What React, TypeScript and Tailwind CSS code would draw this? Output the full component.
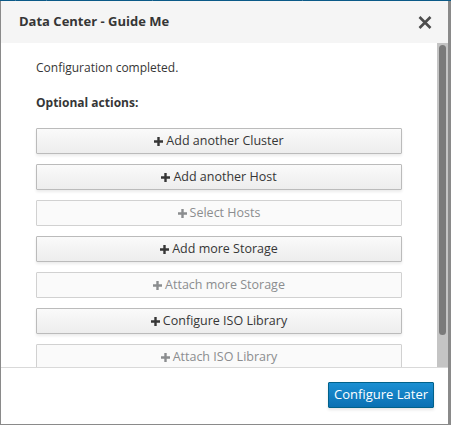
import React from "react";

interface Action {
  label: string;
  enabled: boolean;
}

const actions: Action[] = [
  { label: "Add another Cluster", enabled: true },
  { label: "Add another Host", enabled: true },
  { label: "Select Hosts", enabled: false },
  { label: "Add more Storage", enabled: true },
  { label: "Attach more Storage", enabled: false },
  { label: "Configure ISO Library", enabled: true },
  { label: "Attach ISO Library", enabled: false },
];

function Plus() {
  return (
    <svg width="9" height="9" viewBox="0 0 9 9" className="mr-[3px]">
      <path d="M3.3 0h2.4v3.3H9v2.4H5.7V9H3.3V5.7H0V3.3h3.3z" fill="currentColor" />
    </svg>
  );
}

function ActionButton({ action }: { action: Action }) {
  if (action.enabled) {
    return (
      <button className="flex h-[26px] w-full shrink-0 items-center justify-center rounded-[1px] border border-[#bbbbbb] bg-gradient-to-b from-[#fafafa] to-[#ededed] text-[12.5px] text-[#363636] shadow-[0_2px_3px_rgba(3,3,3,0.08)]">
        <Plus />
        {action.label}
      </button>
    );
  }
  return (
    <button className="flex h-[26px] w-full shrink-0 items-center justify-center rounded-[1px] border border-[#d1d1d1] bg-[#fafafa] text-[12.5px] text-[#8b8d8f]">
      <Plus />
      {action.label}
    </button>
  );
}

export default function App() {
  return (
    <div className="flex h-[425px] w-[451px] flex-col overflow-hidden bg-white font-['Open_Sans',sans-serif]">
      {/* top nav strip behind the modal */}
      <div className="flex h-[1px] shrink-0 bg-[#0b5a88]">
        <div className="ml-[15px] w-[1px] bg-[#3d7ba0]"></div>
        <div className="ml-[30px] w-[1px] bg-[#3d7ba0]"></div>
        <div className="ml-[105px] w-[1px] bg-[#3d7ba0]"></div>
        <div className="ml-[149px] w-[1px] bg-[#3d7ba0]"></div>
      </div>

      <div className="flex min-h-0 flex-1 flex-col border-b border-l border-r-[3px] border-[#8a8a8a]">
        {/* Header */}
        <div className="flex h-[42px] shrink-0 items-center justify-between bg-[#f5f5f5] pl-[18px] pr-[16px]">
          <h4 className="text-[13px] font-bold text-[#363636]">Data Center - Guide Me</h4>
          <svg width="14" height="13" viewBox="0 0 14 13">
            <path d="M1.5 1L12.5 12M12.5 1L1.5 12" stroke="#4d4d4d" strokeWidth="2.6" />
          </svg>
        </div>

        {/* Body */}
        <div className="flex min-h-0 flex-1">
          <div className="flex min-w-0 flex-1 flex-col overflow-hidden px-[35px] pt-[16px]">
            <p className="text-[12px] leading-[17px] text-[#363636]">Configuration completed.</p>
            <p className="mt-[18px] text-[12px] font-bold leading-[17px] text-[#363636]">Optional actions:</p>
            <div className="mt-[17px] flex flex-col gap-[10px]">
              {actions.map((a) => (
                <ActionButton key={a.label} action={a} />
              ))}
            </div>
          </div>
          {/* scrollbar */}
          <div className="w-[11px] shrink-0 bg-[#c4c4c4] px-[2px] pt-[2px] pb-[32px]">
            <div className="h-full w-[7px] rounded-full bg-[#7a7a7a]"></div>
          </div>
        </div>

        {/* Footer */}
        <div className="flex h-[57px] shrink-0 items-start justify-end border-t border-[#d9d9d9] pr-[14px] pt-[14px]">
          <button className="h-[26px] rounded-[1px] border border-[#00618a] bg-gradient-to-b from-[#1b8fd2] to-[#0a70b3] px-[5px] text-[13px] text-white shadow-[0_2px_3px_rgba(3,3,3,0.1)]">
            Configure Later
          </button>
        </div>
      </div>
    </div>
  );
}
